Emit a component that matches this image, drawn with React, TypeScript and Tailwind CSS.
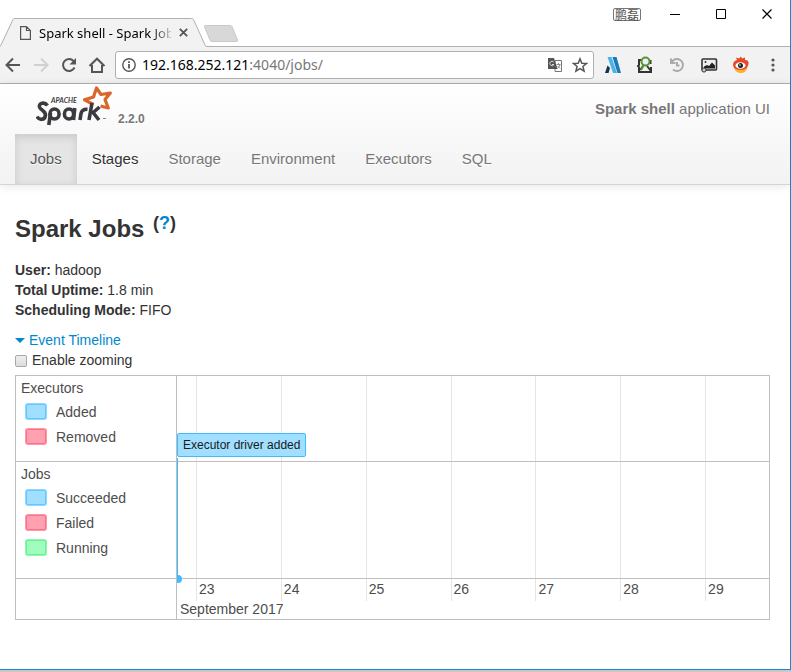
import React from "react";

const legendStyles = {
  blue: "border-[#62c8ff] bg-[#a0dfff] ring-[#90d8ff]",
  red: "border-[#ff7088] bg-[#ffa1b0] ring-[#ff98a8]",
  green: "border-[#62f58e] bg-[#a2fcc0] ring-[#90f8b0]",
};

type Tone = keyof typeof legendStyles;

function Legend({ title, items }: { title: string; items: [Tone, string][] }) {
  return (
    <div className="px-[5px] pt-[2px]">
      <div className="h-5">{title}</div>
      <ul className="pt-px pl-[5px]">
        {items.map(([tone, label]) => (
          <li key={label} className="flex h-[25px] items-center gap-[10px]">
            <span className={`h-[15px] w-5 rounded-[2px] border ring-1 ${legendStyles[tone]}`} />
            {label}
          </li>
        ))}
      </ul>
    </div>
  );
}

const days = ["23", "24", "25", "26", "27", "28", "29"];

function Ticks({ labels }: { labels?: boolean }) {
  return (
    <div className={`grid grid-cols-[19px_repeat(6,85fr)_64fr] ${labels ? "h-[22px]" : "h-full"}`}>
      <span />
      {days.map((d) => (
        <span key={d} className="min-w-0 border-l border-[#e5e5e5] pl-[2px]">
          {labels ? d : null}
        </span>
      ))}
    </div>
  );
}

function SparkLogo() {
  return (
    <svg width="78" height="42" viewBox="0 0 78 42" role="img" aria-label="Apache Spark" className="shrink-0">
      <path d="M57.500 19.500L48.500 14.800 57.500 12 60.500 3 65 9.500 74.300 8 69 14.500 72.300 23 64.500 21" fill="none" stroke="#d9662b" strokeWidth="3.200" strokeLinejoin="round" />
      <g fill="none" stroke="#3c3a3e" strokeWidth="3.600">
        <path d="M11.500 20.500C8.500 16.500 2.500 18 3.500 22 4.500 25 9.500 26 9.500 30 9 35.500 3 35.500 1 31.500" />
        <ellipse cx="18.500" cy="29" rx="4.600" ry="5" />
        <path d="M14.500 28L12.800 40" />
        <ellipse cx="33" cy="29" rx="4.600" ry="5" />
        <path d="M38.800 23L37.500 35M44 35L45 28.500Q46 24 51.500 24.300M53 35L56 18M56 28.500L63.500 22M57 27.500L63 35" />
      </g>
      <path d="M67 33.500H70" stroke="#888" />
      <text x="15" y="18" fontSize="7" fontWeight="700" fontStyle="italic" fill="#3c3a3e" className="font-['Lato',sans-serif]">APACHE</text>
    </svg>
  );
}

const iconButton = "flex size-6 shrink-0 items-center justify-center";

function BrowserChrome() {
  return (
    <div className="bg-white font-['Noto_Sans',sans-serif]">
      <div className="flex h-[47px] justify-between border-b border-[#b0b0b0]">
        <div className="flex items-end">
          <div className="relative -mb-px h-[29px] w-[207px]">
            <svg className="absolute inset-0" width="207" height="29" viewBox="0 0 207 29" aria-hidden="true">
              <path d="M0 29V28.500L1 27 13 1.500Q13.500.5 15 .5H191.500Q193 .5 193.500 1.500L205 27Q205.500 28.500 207 28.500V29Z" fill="#f2f2f2" />
              <path d="M0 28.500L1 27 13 1.500Q13.500.5 15 .5H191.500Q193 .5 193.500 1.500L205 27Q205.500 28.500 207 28.500" fill="none" stroke="#b0b0b0" />
            </svg>
            <div className="relative flex h-full items-center pl-5">
              <svg width="11" height="14" viewBox="0 0 11 14" fill="none" stroke="#555" strokeWidth="1.200" aria-hidden="true"><path d="M.6.6H6.500L10.400 4.500V13.400H.6ZM6.500.600V4.500H10.400" /></svg>
              <span className="ml-2 w-[132px] overflow-hidden whitespace-nowrap text-[13px] text-black [mask-image:linear-gradient(to_right,black_112px,transparent_136px)]">Spark shell - Spark Jobs</span>
              <button aria-label="Close tab" className="ml-2"><svg width="9" height="9" viewBox="0 0 9 9" stroke="#555" strokeWidth="1.800"><path d="M.8.800L8.200 8.200M8.200.800L.8 8.200" /></svg></button>
            </div>
          </div>
          <button aria-label="New tab" className="-ml-1 mb-[3px]">
            <svg width="36" height="18" viewBox="0 0 36 18"><path d="M2.500.5H27Q28.500.5 29 1.500L34.500 15Q35 16.500 33 16.500H9Q7.500 16.500 7 15L1.500 2Q1 .5 2.500.5Z" fill="#d8d8d8" stroke="#c8c8c8" /></svg>
          </button>
        </div>
        <div className="flex h-7 items-center">
          <span className="mr-[11px] rounded-[2px] border border-[#777] px-px font-['Noto_Sans_CJK_SC',sans-serif] text-[12px] leading-[11px] text-[#555]">鹏磊</span>
          <button aria-label="Minimize" className="flex w-[46px] justify-center"><svg width="10" height="10" stroke="#000"><path d="M0 5.500H10" /></svg></button>
          <button aria-label="Maximize" className="flex w-[46px] justify-center"><svg width="10" height="10" fill="none" stroke="#000"><path d="M.5.5H9.500V9.500H.5Z" /></svg></button>
          <button aria-label="Close" className="flex w-[46px] justify-center"><svg width="10" height="10" stroke="#000" strokeWidth="1.200"><path d="M.5.5L9.500 9.500M9.500.5L.5 9.500" /></svg></button>
        </div>
      </div>
      <div className="flex h-[37px] items-center border-b border-[#b0b0b0] bg-[#f2f2f2] pr-[5px] pl-px">
        <button aria-label="Back" className={iconButton}><svg width="16" height="16" viewBox="0 0 16 16" fill="none" stroke="#555" strokeWidth="2"><path d="M15 8H2M8 1.500L1.500 8 8 14.500" /></svg></button>
        <button aria-label="Forward" className={`ml-1 ${iconButton}`}><svg width="16" height="16" viewBox="0 0 16 16" fill="none" stroke="#d0d0d0" strokeWidth="2"><path d="M1 8H14M8 1.500L14.500 8 8 14.500" /></svg></button>
        <button aria-label="Reload" className={`ml-1 ${iconButton}`}><svg width="16" height="16" viewBox="0 0 16 16"><path d="M13.500 10.500A6 6 0 1 1 12.500 4" fill="none" stroke="#555" strokeWidth="2" /><path d="M15 1V7.500H8.500Z" fill="#555" /></svg></button>
        <button aria-label="Home" className={`ml-1 ${iconButton}`}><svg width="18" height="17" viewBox="0 0 18 17" fill="none" stroke="#555" strokeWidth="2"><path d="M1.500 9L9 1.700 16.500 9M4 8V15H14V8" /></svg></button>
        <div className="ml-[6px] flex h-7 min-w-0 flex-1 items-center rounded-[3px] border border-[#b0b0b0] bg-white pr-[5px] pl-[6px]">
          <svg width="14" height="14" viewBox="0 0 14 14" fill="none" stroke="#555" strokeWidth="1.400" aria-hidden="true"><circle cx="7" cy="7" r="6.200" /><path d="M7 6V10.500M7 3.200V4.900" strokeWidth="1.800" /></svg>
          <span className="ml-[6px] flex-1 text-sm text-black">192.168.252.121<span className="text-[#777]">:4040/jobs/</span></span>
          <button aria-label="Translate"><svg width="16" height="16" viewBox="0 0 16 16"><path d="M8 3.500H14.500V14.500H8Z" fill="#fff" stroke="#777" /><path d="M1 1H7L10.500 12H1Z" fill="#555" /><path d="M6.700 5a2.200 2.200 0 1 0 .3 2.500H5" fill="none" stroke="#ddd" /><path d="M9.500 7.500H13.500M11.500 6V7.500M13 7.500Q12.500 10 10.300 11.500M10.500 9L13 11.500" fill="none" stroke="#888" /></svg></button>
          <button aria-label="Bookmark" className="ml-[9px]"><svg width="16" height="16" viewBox="0 0 16 16" fill="none" stroke="#555" strokeWidth="1.500"><path d="M8 1.800L9.800 6.200 14.500 6.500 10.900 9.500 12.100 14.100 8 11.600 3.900 14.100 5.100 9.500 1.500 6.500 6.200 6.200Z" /></svg></button>
        </div>
        <div className="ml-[7px] flex items-center gap-2">
          <button aria-label="Feed extension" className={iconButton}><svg width="18" height="18" viewBox="0 0 18 18"><path d="M3.500 1H7.500L13 17H9Z" fill="#4bb4e6" /><path d="M8.500 1H12.500L17 17H13.500Z" fill="#1b79b8" /><path d="M3.500 9.500L6 12 4.500 17H1Z" fill="#17324d" /></svg></button>
          <button aria-label="Search extension" className={iconButton}><svg width="18" height="18" viewBox="0 0 18 18" fill="none" strokeWidth="2"><path d="M5 4H3V9L2 10 3 11V16H15V11M13 5H14.500V8" stroke="#333" /><path d="M7.500 9.500L4 14" stroke="#333" /><path d="M11 10L15 15" stroke="#333" /><circle cx="9.500" cy="5.500" r="4" fill="#e6f0f5" stroke="#5a9430" /><path d="M7.500 9L5 14" stroke="#5a9430" /></svg></button>
          <button aria-label="History extension" className={iconButton}><svg width="16" height="16" viewBox="0 0 16 16" fill="none" stroke="#aaa" strokeWidth="2"><path d="M2 1.500V6H6.500M2.500 5.500A6 6 0 1 1 4 12.500M8 5V8.500H10.500" /></svg></button>
          <button aria-label="Image extension" className={iconButton}><svg width="18" height="16" viewBox="0 0 18 16"><rect x="2" y="2" width="14.500" height="11" rx="1" fill="#eee" stroke="#333" strokeWidth="1.600" /><path d="M4 11.500V9.500L7 8 9 9 12 5.500 15 8.500V11.500Z" fill="#222" /><circle cx="5.500" cy="5" r="1" fill="#333" /><circle cx="4" cy="13" r="2.100" fill="#ccc" stroke="#333" /></svg></button>
          <button aria-label="Weibo" className={iconButton}><svg width="18" height="18" viewBox="0 0 18 18"><path d="M2 11Q3 17 9 17 14 17 15 12Z" fill="#f7b32b" /><path d="M1 9Q1 5 5 4L4 1.500 7 2.500 9 .5 10 2.500 13 1.500 13 4Q17 4 16.500 8L15 12Q9 16 2 12Z" fill="#e8472c" /><ellipse cx="8.500" cy="9.500" rx="5" ry="3.300" fill="#fff" /><circle cx="8.500" cy="9.500" r="2.500" fill="#222" /><circle cx="8" cy="9" r=".8" fill="#fff" /></svg></button>
          <button aria-label="Menu" className={iconButton}><svg width="4" height="14" viewBox="0 0 4 14" fill="#555"><circle cx="2" cy="2" r="1.600" /><circle cx="2" cy="7" r="1.600" /><circle cx="2" cy="12" r="1.600" /></svg></button>
        </div>
      </div>
    </div>
  );
}

const navItems = ["Jobs", "Stages", "Storage", "Environment", "Executors", "SQL"];
const navStyles: Record<string, string> = {
  Jobs: "bg-[#e5e5e5] text-[#555] shadow-[inset_0_3px_8px_rgba(0,0,0,0.125)]",
  Stages: "text-[#333]",
};

export default function App() {
  return (
    <div className="bg-[#c8c8c8] pb-[2px] font-['Liberation_Sans',Arial,sans-serif] text-sm leading-5 text-[#333]">
      <div className="flex min-h-[calc(100vh-2px)] flex-col border-r border-b border-[#1a84d6] bg-white">
        <BrowserChrome />
        <header className="border-b border-[#d4d4d4] bg-linear-to-b from-white to-[#f2f2f2] text-[15px] text-[#777] shadow-[0_1px_10px_rgba(0,0,0,0.1)] [text-shadow:0_1px_0_white]">
          <div className="flex h-[50px] justify-between pr-5 pl-9">
            <a href="#home" className="flex pt-px">
              <SparkLogo />
              <span className="ml-1 pt-6 text-[12px] font-bold">2.2.0</span>
            </a>
            <p className="pt-[15px]"><strong>Spark shell</strong> application UI</p>
          </div>
          <nav className="flex pl-[15px]">
            {navItems.map((n) => (
              <a key={n} href={`#${n}`} className={`p-[15px] ${navStyles[n] ?? ""}`}>{n}</a>
            ))}
          </nav>
        </header>
        <main className="flex-1 pt-6 pr-5 pl-[15px]">
          <h3 className="text-2xl leading-10 font-bold">
            Spark Jobs <sup className="-top-2 ml-[2px] text-[18px]">(<a href="#help" className="text-[#08c]">?</a>)</sup>
          </h3>
          <ul className="mt-[11px]">
            <li><strong>User:</strong> hadoop</li>
            <li><strong>Total Uptime:</strong> 1.8 min</li>
            <li><strong>Scheduling Mode:</strong> FIFO</li>
          </ul>
          <button className="mt-[10px] flex items-center gap-1 text-[#08c]">
            <svg width="10" height="5" viewBox="0 0 10 5" fill="#08c"><path d="M0 0H10L5 5Z" /></svg>
            Event Timeline
          </button>
          <label className="flex items-center gap-[5px]">
            <input type="checkbox" className="mt-[2px] size-3 appearance-none rounded-[2px] border border-[#a8a8a8] bg-linear-to-b from-[#eee] to-[#ddd]" />
            Enable zooming
          </label>
          <section aria-label="Event timeline" className="mt-[5px] grid grid-cols-[161px_1fr] grid-rows-[86px_117px_40px] border border-[#bfbfbf] text-[#4d4d4d]">
            <div className="border-r border-b border-[#bfbfbf]"><Legend title="Executors" items={[["blue", "Added"], ["red", "Removed"]]} /></div>
            <div className="relative border-b border-[#bfbfbf]">
              <Ticks />
              <div className="absolute bottom-1 left-0 rounded-[2px] border border-[#41bbff] bg-[#a0dfff] px-[5px] py-px text-[12px] text-[#1a1a1a]">Executor driver added</div>
            </div>
            <div className="border-r border-b border-[#bfbfbf]"><Legend title="Jobs" items={[["blue", "Succeeded"], ["red", "Failed"], ["green", "Running"]]} /></div>
            <div className="relative border-b border-[#bfbfbf]">
              <Ticks />
              <span className="absolute -top-1 bottom-0 left-0 w-px bg-[#41bbff]" />
              <span className="absolute -bottom-[5px] left-0 h-2 w-[5px] rounded-r-full bg-[#41bbff]" />
            </div>
            <div className="border-r border-[#bfbfbf]" />
            <div>
              <Ticks labels />
              <div className="-mt-[2px] pl-[3px]">September 2017</div>
            </div>
          </section>
        </main>
      </div>
    </div>
  );
}
